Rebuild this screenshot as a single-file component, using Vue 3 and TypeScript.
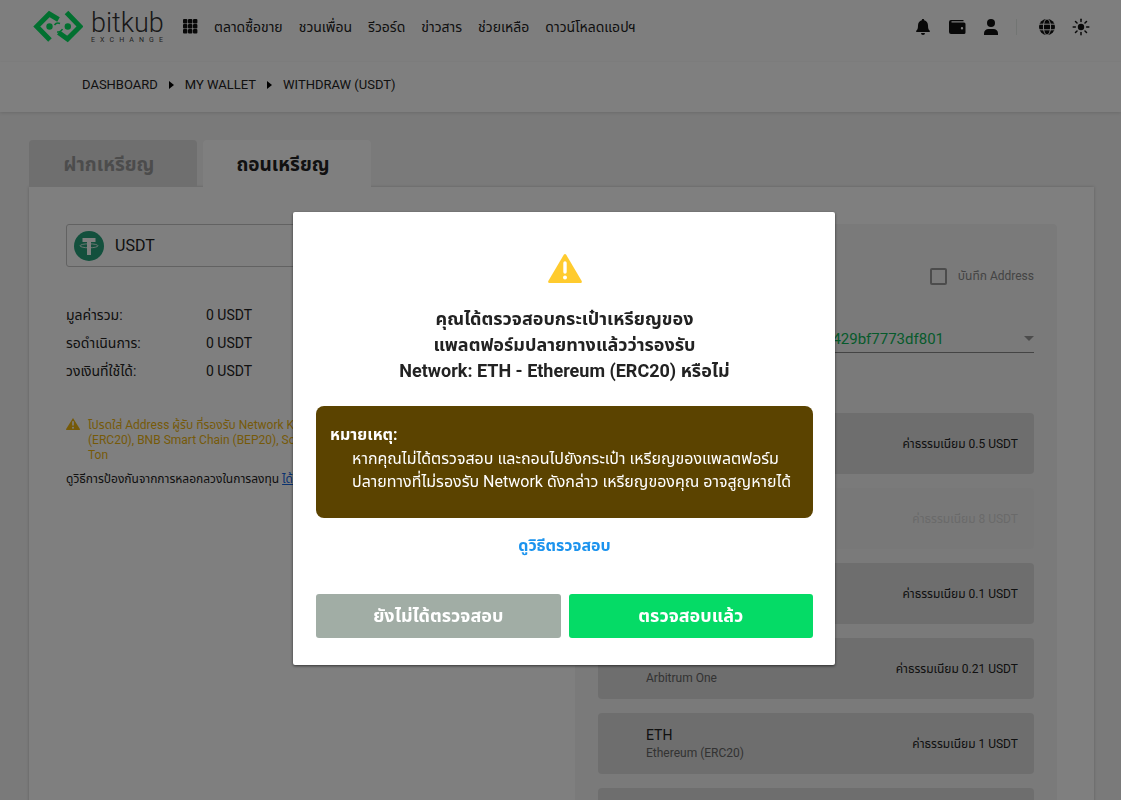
<script setup lang="ts">
import { ref } from 'vue'

interface Network {
  name: string
  chain: string
  fee: string
  disabled?: boolean
}

const navItems: string[] = ['ตลาดซื้อขาย', 'ชวนเพื่อน', 'รีวอร์ด', 'ข่าวสาร', 'ช่วยเหลือ', 'ดาวน์โหลดแอปฯ']
const crumbs: string[] = ['DASHBOARD', 'MY WALLET', 'WITHDRAW (USDT)']
const balances = [
  { label: 'มูลค่ารวม:', value: '0 USDT' },
  { label: 'รอดำเนินการ:', value: '0 USDT' },
  { label: 'วงเงินที่ใช้ได้:', value: '0 USDT' },
]
const networks: Network[] = [
  { name: '', chain: '', fee: '0.5' },
  { name: '', chain: '', fee: '8', disabled: true },
  { name: '', chain: '', fee: '0.1' },
  { name: 'ARB', chain: 'Arbitrum One', fee: '0.21' },
  { name: 'ETH', chain: 'Ethereum (ERC20)', fee: '1' },
  { name: '', chain: '', fee: '' },
]
const dots = [0, 1, 2, 3, 4, 5, 6, 7, 8]
const rays = [0, 45, 90, 135, 180, 225, 270, 315]
const saveAddress = ref(false)
</script>

<template>
  <div class="page">
    <header class="topbar">
      <a class="logo" href="#">
        <svg class="logo-mark" viewBox="0 0 50 34" width="50" height="34" aria-hidden="true">
          <g fill="none" stroke="#05e060" stroke-width="5">
            <path d="M25.500 9.500 L16.300 4 L3.800 16.500 L17 30" />
            <path d="M25.500 22.500 L34.500 29 L47 16.500 L33.500 2.500" />
          </g>
          <circle cx="16.500" cy="16.500" r="3.200" fill="#05e060" />
          <circle cx="34.800" cy="16.500" r="3.200" fill="#05e060" />
          <path d="M21.500 15q2-3 5.500-1.500M24 22q3.500.5 5.500-3" fill="none" stroke="#05e060" stroke-width="1.500" />
        </svg>
        <span class="logo-words">
          <span class="logo-name">bitkub</span>
          <span class="logo-sub"><span v-for="(c, i) in 'EXCHANGE'" :key="i">{{ c }}</span></span>
        </span>
      </a>
      <button class="icon-btn apps" type="button" aria-label="Apps">
        <svg viewBox="0 0 15 15" width="15" height="15">
          <rect v-for="d in dots" :key="d" :x="(d % 3) * 5" :y="Math.floor(d / 3) * 5" width="4.400" height="4.400" rx="1" />
        </svg>
      </button>
      <nav class="nav">
        <a v-for="n in navItems" :key="n" href="#">{{ n }}</a>
      </nav>
      <div class="tools">
        <button class="icon-btn" type="button" aria-label="Notifications">
          <svg viewBox="0 0 18 18" width="18" height="18">
            <path d="M9 1c.8 0 1.200.5 1.200 1.200C12.800 2.800 14 5 14 7.500c0 3 .6 4.300 1.800 5.300v1.200H2.200v-1.200C3.400 11.800 4 10.500 4 7.500c0-2.500 1.200-4.700 3.800-5.300C7.800 1.500 8.200 1 9 1zM7 15h4a2 2 0 0 1-4 0z" />
          </svg>
        </button>
        <button class="icon-btn" type="button" aria-label="Wallet">
          <svg viewBox="0 0 18 18" width="18" height="18">
            <path fill-rule="evenodd" d="M3 2h12.500v1.300H3.500v1.200H16a1.500 1.500 0 0 1 1.500 1.500v8.500A1.500 1.500 0 0 1 16 16H3a2 2 0 0 1-2-2V4a2 2 0 0 1 2-2zm11 7a1.200 1.200 0 1 0 0 2.400A1.200 1.200 0 0 0 14 9z" />
          </svg>
        </button>
        <button class="icon-btn" type="button" aria-label="Account">
          <svg viewBox="0 0 18 18" width="18" height="18">
            <circle cx="9" cy="5" r="4" />
            <path d="M2 17v-1.500C2 12.500 4 11 6.500 11h5c2.500 0 4.500 1.500 4.500 4.500V17z" />
          </svg>
        </button>
        <span class="divider"></span>
        <button class="icon-btn lang" type="button" aria-label="Language">
          <svg viewBox="0 0 18 18" width="18" height="18">
            <circle cx="9" cy="9" r="8" />
            <g fill="none" stroke="#fff" stroke-width="1">
              <ellipse cx="9" cy="9" rx="3.600" ry="8" />
              <path d="M1 6.200h16M1 11.800h16" />
            </g>
          </svg>
        </button>
        <button class="icon-btn" type="button" aria-label="Theme">
          <svg viewBox="0 0 18 18" width="18" height="18">
            <circle cx="9" cy="9" r="3.200" />
            <path v-for="r in rays" :key="r" d="M9 1.200v2.200" stroke="#111" stroke-width="1.500" stroke-linecap="round" :transform="`rotate(${r} 9 9)`" />
          </svg>
        </button>
      </div>
    </header>

    <nav class="crumbs" aria-label="Breadcrumb">
      <template v-for="(c, i) in crumbs" :key="c">
        <svg v-if="i > 0" viewBox="0 0 5 8" width="5" height="8" aria-hidden="true"><path d="M0 0l5 4-5 4z" /></svg>
        <a href="#">{{ c }}</a>
      </template>
    </nav>

    <main class="content">
      <div class="tabs">
        <button type="button" class="tab">ฝากเหรียญ</button>
        <button type="button" class="tab active">ถอนเหรียญ</button>
      </div>
      <section class="card">
        <div class="left">
          <label class="coin">
            <svg viewBox="0 0 30 30" width="30" height="30" aria-hidden="true">
              <circle cx="15" cy="15" r="15" fill="#26a17b" />
              <path d="M8.500 7h13v4h-4.500v13h-4V11H8.500z" fill="#fff" />
              <ellipse cx="15" cy="14.800" rx="9" ry="2" fill="none" stroke="#fff" stroke-width="0.800" />
            </svg>
            <select aria-label="Coin"><option>USDT</option></select>
          </label>
          <dl class="balances">
            <div v-for="b in balances" :key="b.label">
              <dt>{{ b.label }}</dt>
              <dd>{{ b.value }}</dd>
            </div>
          </dl>
          <div class="notice">
            <svg viewBox="0 0 34 29" width="14" height="12" aria-hidden="true">
              <path d="M17 0L34 27.500Q34 29 32.500 29H1.500Q0 29 0 27.500z" fill="#edb411" />
              <path d="M17 9v8" stroke="#fff" stroke-width="4" stroke-linecap="round" />
              <circle cx="17" cy="23.500" r="2.400" fill="#fff" />
            </svg>
            <p>โปรดใส่ Address ผู้รับ ที่รองรับ Network KUB<br />(ERC20), BNB Smart Chain (BEP20), Solana<br />Ton</p>
          </div>
          <p class="tip">ดูวิธีการป้องกันจากการหลอกลวงในการลงทุน <a href="#">ได้ที่นี่</a></p>
        </div>
        <div class="right">
          <label class="save">
            <input v-model="saveAddress" type="checkbox" />
            <span>บันทึก Address</span>
          </label>
          <div class="address">
            <select aria-label="Address"><option>429bf7773df801</option></select>
            <svg viewBox="0 0 10 5" width="10" height="5" aria-hidden="true"><path d="M0 0h10L5 5z" /></svg>
          </div>
          <ul class="networks">
            <li v-for="(n, i) in networks" :key="i" :class="{ disabled: n.disabled }">
              <div class="net">
                <strong>{{ n.name }}</strong>
                <small>{{ n.chain }}</small>
              </div>
              <span v-if="n.fee" class="fee">ค่าธรรมเนียม {{ n.fee }} USDT</span>
            </li>
          </ul>
        </div>
      </section>
    </main>

    <div class="overlay">
      <div class="dialog" role="dialog" aria-modal="true" aria-labelledby="dialog-title">
        <svg class="warn" viewBox="0 0 34 29" width="34" height="29" aria-hidden="true">
          <path d="M15.800.8Q17-.8 18.200.8L33.700 27Q34.300 29 32.500 29H1.500Q-.3 29 .3 27z" fill="#ffcb2e" />
          <path d="M17 9v9" stroke="#fff" stroke-width="3.400" stroke-linecap="round" />
          <circle cx="17" cy="23.500" r="2" fill="#fff" />
        </svg>
        <h2 id="dialog-title">
          คุณได้ตรวจสอบกระเป๋าเหรียญของ<br />แพลตฟอร์มปลายทางแล้วว่ารองรับ<br />Network: ETH - Ethereum (ERC20) หรือไม่
        </h2>
        <div class="note">
          <strong>หมายเหตุ:</strong>
          <p>หากคุณไม่ได้ตรวจสอบ และถอนไปยังกระเป๋า เหรียญของแพลตฟอร์ม<br />ปลายทางที่ไม่รองรับ Network ดังกล่าว เหรียญของคุณ อาจสูญหายได้</p>
        </div>
        <a class="how" href="#">ดูวิธีตรวจสอบ</a>
        <div class="actions">
          <button type="button" class="no">ยังไม่ได้ตรวจสอบ</button>
          <button type="button" class="yes">ตรวจสอบแล้ว</button>
        </div>
      </div>
    </div>
  </div>
</template>

<style>
body {
  overflow: hidden;
}
</style>

<style scoped>
.page,
.page * {
  box-sizing: border-box;
}
.page {
  min-height: 100vh;
  background: #f4f4f4;
  color: #222;
  font-family: Roboto, "Noto Sans Thai", "Noto Sans", sans-serif;
  font-size: 14px;
  line-height: 20px;
}
button,
select {
  font: inherit;
  color: inherit;
  border: 0;
  background: none;
  padding: 0;
}
a {
  color: inherit;
  text-decoration: none;
}
p,
h2,
dl,
dd,
ul {
  margin: 0;
  padding: 0;
}
svg {
  display: block;
  flex: none;
}
.topbar {
  display: flex;
  align-items: center;
  height: 62px;
  padding: 0 31px 9px 33px;
  background: #fdfdfd;
}
.logo {
  display: flex;
  align-items: center;
  gap: 8px;
}
.logo-words {
  width: 72px;
  color: #444;
}
.logo-name {
  display: block;
  font-weight: 300;
  font-size: 27px;
  line-height: 28px;
  color: #333;
}
.logo-sub {
  display: flex;
  justify-content: space-between;
  font-size: 7px;
  line-height: 7px;
}
.icon-btn {
  display: block;
  fill: #111;
}
.apps {
  margin: 0 16px 0 20px;
}
.nav {
  display: flex;
  gap: 16px;
  white-space: nowrap;
}
.tools {
  display: flex;
  align-items: center;
  gap: 16px;
  margin-left: auto;
}
.divider {
  width: 1px;
  height: 16px;
  background: #e4ebe7;
}
.lang {
  margin-left: 5px;
}
.crumbs {
  display: flex;
  align-items: center;
  gap: 11px;
  height: 50px;
  padding: 0 82px 4px;
  background: #fff;
  box-shadow: 0 1px 3px rgba(0, 0, 0, 0.12);
  font-size: 13px;
}
.content {
  padding: 28px 27px 0 29px;
}
.tabs {
  display: flex;
  gap: 6px;
}
.tab {
  width: 168px;
  height: 47px;
  padding: 2px 8px 0 0;
  border-radius: 4px 4px 0 0;
  background: #dedede;
  color: #999;
  font-size: 19px;
  font-weight: 700;
}
.tab.active {
  background: #fff;
  color: #222;
}
.card {
  display: grid;
  grid-template-columns: 486fr 482fr;
  gap: 23px;
  padding: 37px;
  background: #fff;
  box-shadow: 0 0 3px rgba(0, 0, 0, 0.2);
}
.coin {
  display: flex;
  align-items: center;
  gap: 11px;
  height: 43px;
  padding: 0 7px;
  border: 1px solid #c4c4c4;
  border-radius: 3px;
  font-size: 16px;
}
.coin select {
  flex: 1;
  appearance: none;
}
.balances {
  margin-top: 34px;
}
.balances div {
  display: flex;
  height: 28px;
  line-height: 28px;
}
.balances dt {
  width: 140px;
}
.notice {
  display: flex;
  gap: 8px;
  margin-top: 33px;
  color: #edb411;
  font-size: 12px;
  line-height: 15px;
  white-space: nowrap;
}
.tip {
  margin-top: 6px;
  font-size: 12px;
  white-space: nowrap;
}
.tip a {
  color: #1565e0;
  text-decoration: underline;
}
.right {
  padding: 41px 23px;
  border-radius: 4px;
  background: #f4f4f4;
}
.save {
  display: flex;
  align-items: center;
  justify-content: flex-end;
  gap: 11px;
  height: 22px;
  color: #888;
  font-size: 12px;
}
.save input {
  appearance: none;
  width: 17px;
  height: 17px;
  margin: 0;
  border: 2px solid #999;
  border-radius: 2px;
}
.address {
  display: flex;
  align-items: center;
  height: 28px;
  margin-top: 38px;
  border-bottom: 1px solid #888;
  color: #0db558;
  font-size: 15px;
}
.address select {
  flex: 1;
  padding-right: 80px;
  text-align-last: right;
  appearance: none;
}
.address svg {
  fill: #999;
}
.networks {
  display: grid;
  gap: 14px;
  margin-top: 60px;
  list-style: none;
}
.networks li {
  display: flex;
  align-items: center;
  justify-content: space-between;
  height: 61px;
  padding: 0 16px 0 48px;
  border-radius: 4px;
  background: #dcdcdc;
}
.networks .disabled {
  background: #f1f1f1;
  color: #d4d4d4;
}
.net strong,
.net small {
  display: block;
  font-size: 14px;
  font-weight: 400;
  line-height: 18px;
}
.net small {
  color: #666;
  font-size: 12px;
}
.fee {
  font-size: 12px;
}
.overlay {
  position: fixed;
  inset: 0;
  display: flex;
  align-items: flex-start;
  justify-content: center;
  padding: 212px 0 0 7px;
  background: rgba(0, 0, 0, 0.5);
}
.dialog {
  width: 100%;
  max-width: 542px;
  padding: 42px 22px 27px 23px;
  border-radius: 2px;
  background: #fff;
  text-align: center;
  box-shadow: 0 1px 3px rgba(0, 0, 0, 0.6);
}
.warn {
  margin: 0 auto;
}
h2 {
  margin-top: 23px;
  font-size: 18px;
  font-weight: 700;
  line-height: 26px;
  white-space: nowrap;
}
.note {
  margin-top: 22px;
  padding: 17px 14px 25px;
  border-radius: 8px;
  background: #5b4300;
  color: #fff;
  text-align: left;
  font-size: 16px;
}
.note strong {
  display: block;
  line-height: 24px;
}
.note p {
  padding-left: 22px;
  line-height: 23px;
  white-space: nowrap;
}
.how {
  display: block;
  margin-top: 18px;
  color: #1b93ee;
  font-size: 16px;
  font-weight: 700;
}
.actions {
  display: grid;
  grid-template-columns: 1fr 1fr;
  gap: 8px;
  margin-top: 38px;
}
.actions button {
  height: 44px;
  border-radius: 3px;
  color: #fff;
  font-size: 18px;
  font-weight: 700;
}
.no {
  background: #a1ada5;
}
.yes {
  background: #05db66;
}
</style>
